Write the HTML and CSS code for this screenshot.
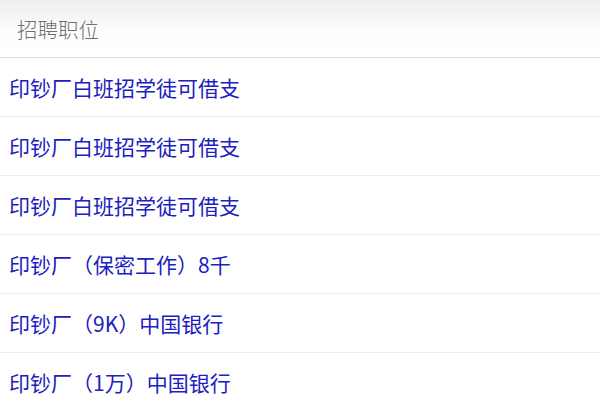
FILE: index.html
```html
<!DOCTYPE html>
<html lang="zh-CN">
<head>
<meta charset="utf-8">
<link rel="stylesheet" href="styles.css">
</head>
<body>
<div class="header"><span class="title">招聘职位</span></div>
<ul class="list">
  <li class="item"><a class="link">印钞厂白班招学徒可借支</a></li>
  <li class="item"><a class="link">印钞厂白班招学徒可借支</a></li>
  <li class="item"><a class="link">印钞厂白班招学徒可借支</a></li>
  <li class="item"><a class="link">印钞厂（保密工作）8千</a></li>
  <li class="item"><a class="link">印钞厂（9K）中国银行</a></li>
  <li class="item"><a class="link">印钞厂（1万）中国银行</a></li>
</ul>
</body>
</html>
```
FILE: styles.css
```css
html, body {
  margin: 0;
  padding: 0;
  background: #fff;
  font-family: "Noto Sans CJK SC", "Noto Sans", sans-serif;
}
.header {
  height: 57px;
  display: flex;
  align-items: center;
  padding-left: 17px;
  background: linear-gradient(to bottom, #efefef 0px, #f3f3f3 12px, #fdfdfd 30px, #fff 57px);
  border-bottom: 1px solid #dedede;
}
.title {
  color: #6e6e6e;
  font-size: 20.5px;
  font-weight: 300;
}
.list {
  list-style: none;
  margin: 0;
  padding: 0;
}
.item {
  height: 58px;
  display: flex;
  align-items: center;
  padding-left: 9px;
  border-bottom: 1px solid #ececec;
}
.link {
  color: #2020c0;
  font-size: 21px;
}
```
